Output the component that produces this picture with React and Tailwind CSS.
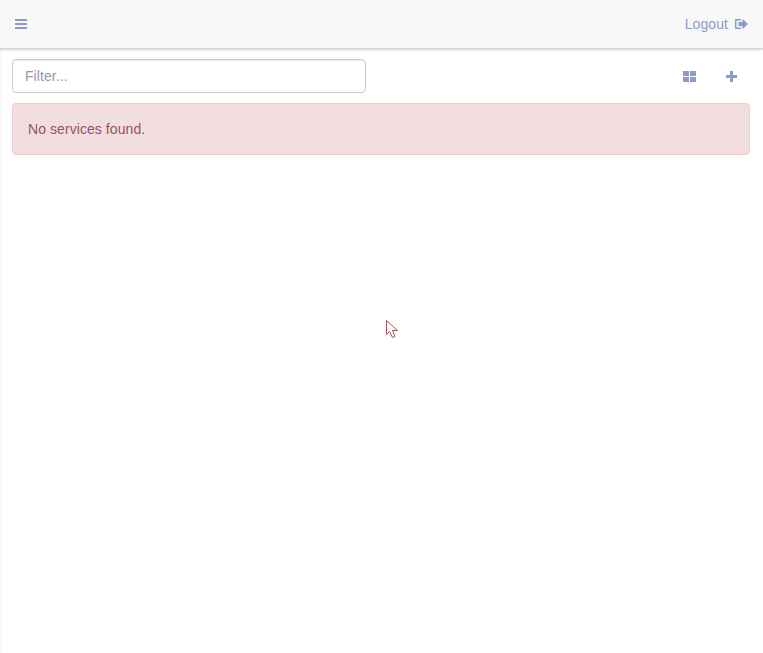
const iconColor = 'text-[#8c9bc9]';

function Cursor() {
    return (
        <svg className="absolute left-[383px] top-[319px]" width="15" height="20" viewBox="0 0 15 20" fill="white">
            <path d="M1.5 1.5V15.5L4.5 12.5L7.5 18.5L10 17.5L7.5 11.5H12.5Z" stroke="#a4505f" strokeWidth="1" />
        </svg>
    );
}

export default function App() {
    return (
        <div className="relative min-h-[653px] bg-white border-l-2 border-[#f8f8f8] font-['Liberation_Sans',sans-serif] text-[14px] tracking-[0.07px]">
            <nav className="-ml-0.5 flex h-[49px] items-center justify-between border-b border-[#d4d4d4] bg-[#f8f8f8] pl-[15px] pr-[15px] shadow-[0_1px_2px_rgba(0,0,0,0.18)]">
                <svg className={iconColor} width="12" height="10" viewBox="0 0 12 10" fill="currentColor">
                    <rect width="12" height="2" />
                    <rect y="4" width="12" height="2" />
                    <rect y="8" width="12" height="2" />
                </svg>
                <a className={`flex items-center gap-[7px] ${iconColor}`}>
                    Logout
                    <svg width="13" height="10" viewBox="0 0 13 10" fill="currentColor">
                        <path d="M1 0H6V1.4H1.5V8.6H6V10H1C.4 10 0 9.6 0 9V1C0 .4.4 0 1 0Z" />
                        <path d="M3.5 3H7.5V0L13 5L7.5 10V7H3.5Z" />
                    </svg>
                </a>
            </nav>
            <div className="flex items-center justify-between pl-[10px] pr-[26px] pt-[10px]">
                <input
                    placeholder="Filter..."
                    className="h-[34px] w-[354px] rounded border border-[#cccccc] px-3 text-[14px] tracking-[0.07px] text-[#555555] placeholder:text-[#a393ad] shadow-[inset_0_1px_1px_rgba(0,0,0,0.075)]"
                />
                <div className={`flex items-center gap-[30px] ${iconColor}`}>
                    <svg width="13" height="11" viewBox="0 0 13 11" fill="currentColor">
                        <rect width="6" height="5" />
                        <rect x="7" width="6" height="5" />
                        <rect y="6" width="6" height="5" />
                        <rect x="7" y="6" width="6" height="5" />
                    </svg>
                    <svg width="11" height="11" viewBox="0 0 11 11" fill="currentColor">
                        <path d="M4 0H7V4H11V7H7V11H4V7H0V4H4Z" />
                    </svg>
                </div>
            </div>
            <div className="ml-[10px] mr-[13px] mt-[10px] flex h-[52px] items-center rounded border border-[#ebccd1] bg-[#f2dede] px-[15px] text-[#9a4e68]">
                No services found.
            </div>
            <Cursor />
        </div>
    );
}
